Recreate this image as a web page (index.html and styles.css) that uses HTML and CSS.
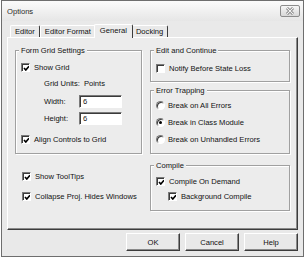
FILE: index.html
```html
<!DOCTYPE html>
<html lang="en">
<head>
    <meta charset="UTF-8">
    <title>Options</title>
    <link rel="stylesheet" href="styles.css">
</head>
<body>
    <div class="window">
        <div class="titlebar">
            <span class="title">Options</span>
            <span class="close">
                <svg width="10" height="8" viewBox="0 0 10 8">
                    <path d="M2 1 L8 7 M8 1 L2 7" stroke="#6a6a6a" stroke-width="2.6" fill="none"/>
                    <path d="M2 1 L8 7 M8 1 L2 7" stroke="#f4f4f4" stroke-width="1.1" fill="none"/>
                </svg>
            </span>
        </div>
        <div class="content">
            <div class="tabs">
                <div class="tab">Editor</div>
                <div class="tab">Editor Format</div>
                <div class="tab active">General</div>
                <div class="tab">Docking</div>
            </div>
            <div class="panel">
                <div class="col">
                    <div class="group grid-group">
                        <div class="group-title">Form Grid Settings</div>
                        <label class="row show-grid"><span class="check on"></span>Show Grid</label>
                        <div class="row units"><span class="units-label">Grid Units:</span>Points</div>
                        <div class="row field width-row"><span class="field-label">Width:</span><span class="input">6</span></div>
                        <div class="row field height-row"><span class="field-label">Height:</span><span class="input">6</span></div>
                        <label class="row align"><span class="check on"></span>Align Controls to Grid</label>
                    </div>
                    <label class="row tooltips"><span class="check on"></span>Show ToolTips</label>
                    <label class="row collapse"><span class="check on"></span>Collapse Proj. Hides Windows</label>
                </div>
                <div class="col">
                    <div class="group edit-group">
                        <div class="group-title">Edit and Continue</div>
                        <label class="row notify"><span class="check"></span>Notify Before State Loss</label>
                    </div>
                    <div class="group error-group">
                        <div class="group-title">Error Trapping</div>
                        <label class="row radio-row first"><span class="radio"></span>Break on All Errors</label>
                        <label class="row radio-row"><span class="radio on"></span>Break in Class Module</label>
                        <label class="row radio-row"><span class="radio"></span>Break on Unhandled Errors</label>
                    </div>
                    <div class="group compile-group">
                        <div class="group-title">Compile</div>
                        <label class="row demand"><span class="check on"></span>Compile On Demand</label>
                        <label class="row background"><span class="check on"></span>Background Compile</label>
                    </div>
                </div>
            </div>
            <div class="buttons">
                <div class="button">OK</div>
                <div class="button">Cancel</div>
                <div class="button">Help</div>
            </div>
        </div>
    </div>
</body>
</html>
```

FILE: styles.css
```css
body {
    margin: 0;
    background-color: #ffffff;
    font-family: "Liberation Sans", Arial, sans-serif;
    font-size: 7.6px;
    color: #111111;
}
.window {
    width: 301px;
    height: 255px;
    margin-left: 1px;
    border: 1px solid #6e6e6e;
    background-color: #e9e9e9;
    display: flex;
    flex-direction: column;
}
.titlebar {
    height: 20px;
    display: flex;
    align-items: center;
    justify-content: space-between;
    padding: 0 3px 0 5px;
    background: linear-gradient(#fbfbfb, #e6e6e6);
}
.title {
    color: #2a2a2a;
}
.close {
    width: 18px;
    height: 10px;
    border: 1px solid #8c8c8c;
    border-radius: 2px;
    background: linear-gradient(#f6f6f6, #d8d8d8);
    display: flex;
    justify-content: center;
    align-items: center;
}
.content {
    padding: 2px 5px 0 5px;
}
.tabs {
    display: flex;
    align-items: flex-end;
    height: 14px;
    padding-left: 3px;
}
.tab {
    height: 11px;
    line-height: 11px;
    padding: 0 4px;
    border-top: 1px solid #ffffff;
    border-left: 1px solid #ffffff;
    border-right: 1px solid #3c3c3c;
    border-radius: 2px 2px 0 0;
}
.tab.active {
    height: 13px;
    line-height: 12px;
    margin: 0 -2px -1px;
    padding: 0 5px;
    background-color: #ececec;
    position: relative;
}
.panel {
    height: 179px;
    border-top: 1px solid #ffffff;
    border-left: 1px solid #ffffff;
    border-right: 1px solid #3c3c3c;
    border-bottom: 1px solid #3c3c3c;
    box-shadow: inset -1px -1px 0 #8a8a8a;
    background-color: #ececec;
    display: grid;
    grid-template-columns: 127px 140px;
    align-items: start;
    column-gap: 8px;
    padding: 12px 6px 0 7px;
}
.col {
    display: flex;
    flex-direction: column;
}
.group {
    box-sizing: border-box;
    border: 1px solid #a0a0a0;
    box-shadow: 1px 1px 0 #ffffff, inset 1px 1px 0 #ffffff;
    padding: 0 6px 0 5px;
    display: flex;
    flex-direction: column;
}
.group-title {
    align-self: flex-start;
    height: 9px;
    line-height: 9px;
    margin: -5px 0 0 -2px;
    padding: 0 2px;
    background-color: #ececec;
}
.row {
    display: flex;
    align-items: center;
    height: 12px;
}
.check {
    box-sizing: border-box;
    width: 9px;
    height: 9px;
    margin-right: 4px;
    border-top: 1px solid #7a7a7a;
    border-left: 1px solid #7a7a7a;
    border-right: 1px solid #ffffff;
    border-bottom: 1px solid #ffffff;
    box-shadow: inset 1px 1px 0 #3a3a3a;
    background-color: #ffffff;
}
.check.on {
    background: #ffffff url("data:image/svg+xml,%3Csvg xmlns='http://www.w3.org/2000/svg' width='7' height='7' viewBox='0 0 7 7'%3E%3Cpath d='M1 3 L2.8 5 L6 1.2' stroke='%23000' stroke-width='1.6' fill='none'/%3E%3C/svg%3E") no-repeat 1px 1px;
}
.radio {
    box-sizing: border-box;
    width: 9px;
    height: 9px;
    margin-right: 3px;
    border-radius: 50%;
    border-top: 1px solid #7a7a7a;
    border-left: 1px solid #7a7a7a;
    border-right: 1px solid #ffffff;
    border-bottom: 1px solid #ffffff;
    box-shadow: inset 1px 1px 0 #3a3a3a;
    background-color: #ffffff;
    display: flex;
    justify-content: center;
    align-items: center;
}
.radio.on::after {
    content: "";
    width: 3px;
    height: 3px;
    border-radius: 50%;
    background-color: #000000;
}
.grid-group {
    height: 104px;
}
.show-grid {
    margin-top: 6px;
}
.units {
    margin: 4px 0 0 23px;
}
.units-label {
    margin-right: 4px;
}
.field {
    height: 13px;
    margin-left: 23px;
}
.width-row {
    margin-top: 6px;
}
.height-row {
    margin-top: 4px;
}
.field-label {
    width: 35px;
}
.input {
    box-sizing: border-box;
    width: 43px;
    height: 13px;
    line-height: 11px;
    padding-left: 3px;
    border-top: 1px solid #7a7a7a;
    border-left: 1px solid #7a7a7a;
    border-right: 1px solid #ffffff;
    border-bottom: 1px solid #ffffff;
    box-shadow: inset 1px 1px 0 #3a3a3a;
    background-color: #ffffff;
}
.align {
    margin-top: 8px;
}
.tooltips {
    margin: 16px 0 0 7px;
}
.collapse {
    margin: 8px 0 0 7px;
}
.edit-group {
    height: 32px;
}
.notify {
    margin-top: 7px;
}
.error-group {
    height: 64px;
    margin-top: 8px;
}
.radio-row {
    margin-top: 5px;
}
.radio-row.first {
    margin-top: 4px;
}
.compile-group {
    height: 46px;
    margin-top: 11px;
}
.demand {
    margin-top: 5px;
}
.background {
    margin: 3px 0 0 12px;
}
.buttons {
    display: flex;
    justify-content: flex-end;
    gap: 5px;
    margin-top: 3px;
}
.button {
    box-sizing: border-box;
    width: 54px;
    height: 18px;
    border-top: 1px solid #ffffff;
    border-left: 1px solid #ffffff;
    border-right: 1px solid #3c3c3c;
    border-bottom: 1px solid #3c3c3c;
    box-shadow: inset -1px -1px 0 #8a8a8a;
    display: flex;
    justify-content: center;
    align-items: center;
}
```
